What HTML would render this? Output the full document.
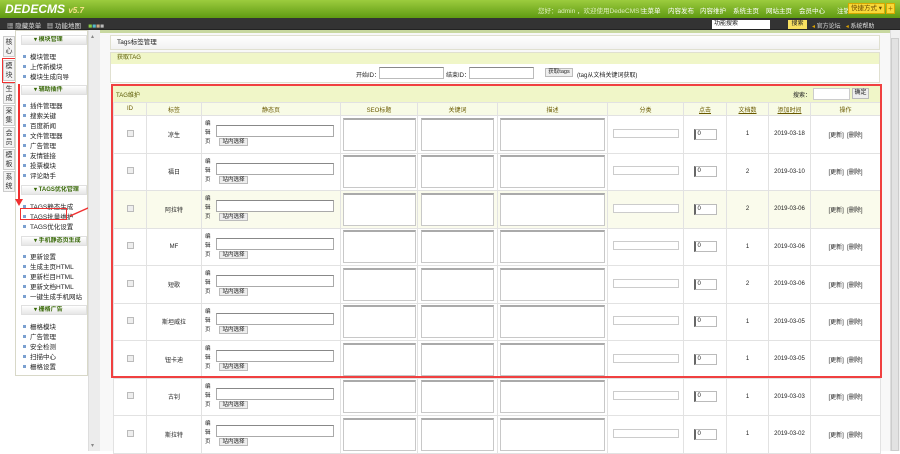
<!DOCTYPE html>
<html><head><meta charset="utf-8"><style>
*{margin:0;padding:0;box-sizing:border-box}
body{width:900px;height:451px;overflow:hidden;position:relative;background:#fff;font-family:"Liberation Sans","Noto Sans CJK SC",sans-serif;font-size:7px;color:#222}
.a{position:absolute;white-space:nowrap}
#hd{left:0;top:0;width:900px;height:18px;background:linear-gradient(#9ccc3e,#5f9a12)}
#bar{left:0;top:18px;width:900px;height:12px;background:#333;border-bottom:1px solid #222}
.logo{left:5px;top:2px;font:italic bold 12px "Liberation Sans",sans-serif;color:#fff}
.nav{top:5px;color:#fff;font-size:6.5px}
.tab{left:3px;width:12px;height:21px;border:1px solid #ccc;background:#f4f4f4;font-size:7px;line-height:9px;text-align:center;padding-top:1px;color:#333;white-space:normal}
#menu{left:15px;top:30px;width:73px;height:346px;background:#fff;border:1px solid #d8d8c8}
.mh{left:5px;width:66px;height:10px;background:linear-gradient(#fff,#e6e6e6);border:1px solid #e0e0e0;font-size:6px;line-height:8px;color:#3a6a0a;font-weight:bold;padding-left:12px;overflow:hidden}
.mi{left:7px;font-size:6.5px;color:#222}
.mi:before{content:"";display:inline-block;width:3px;height:3px;background:#7aa0d0;margin-right:4px;vertical-align:1px}
#split{left:88px;top:30px;width:12px;height:421px;background:#ececec;border-left:1px solid #ddd}
#cont{left:100px;top:30px;width:790px;height:421px;background:#f8f8f8;border-top:3px solid #c8d8a0}
table{border-collapse:collapse;table-layout:fixed;position:absolute;left:113px;top:102px;width:767px}
td{border:1px solid #e2e2e2;text-align:center;font-size:6px;vertical-align:middle;position:relative;white-space:nowrap}
th{height:13px;border:1px solid #e2e2e2;background:#f8fbe6;font-weight:normal;font-size:6px;color:#6a5a00}
tr.r{height:37.5px;background:#fff}
tr.y{background:#fafbec}
.cb{display:inline-block;width:7px;height:7px;border:1px solid #bbb;background:#eee}
.ta{display:block;margin:0 auto;height:33px;border:1px solid #c8c8c8;border-top:2px solid #aaa;background:#fff}
.sp{text-align:left;padding-left:3px}
.sp .v{position:absolute;left:3px;top:4px;width:6px;font-size:5.5px;line-height:9px;white-space:normal}
.sp .in{position:absolute;left:14px;top:9px;width:118px;height:12px;border:1px solid #aaa;border-top-color:#888;background:#fff}
.sp .bt{position:absolute;left:17px;top:22px;width:29px;height:8px;border:1px solid #bbb;background:#eee;font-size:5.5px;line-height:7px;text-align:center}
.ci{display:inline-block;width:66px;height:9px;border:1px solid #ccc;background:#fff}
.ck{display:inline-block;width:23px;height:11px;border:1px solid #bbb;border-left:2px solid #666;background:#fff;font-size:6px;line-height:9px;text-align:left;padding-left:2px}
</style></head><body>
<div id="hd" class="a"></div>
<div class="a logo">DEDECMS <span style="font-size:8px;color:#f5e28a">v5.7</span></div>
<div class="a nav" style="left:538px;color:#ddeebb">您好：admin ，欢迎使用DedeCMS！</div>
<div class="a nav" style="left:641px">主菜单</div>
<div class="a nav" style="left:668px">内容发布</div>
<div class="a nav" style="left:700px">内容维护</div>
<div class="a nav" style="left:733px">系统主页</div>
<div class="a nav" style="left:766px">网站主页</div>
<div class="a nav" style="left:799px">会员中心</div>
<div class="a nav" style="left:837px">注销</div>
<div class="a" style="left:848px;top:3px;width:37px;height:11px;background:#f8d838;border:1px solid #d8a800;font-size:6.5px;line-height:9px;padding-left:2px;color:#6a4a00">快捷方式 ▾</div>
<div class="a" style="left:886px;top:3px;width:9px;height:11px;background:#f8d838;border:1px solid #d8a800;color:#a07000;font-size:8px;line-height:9px;text-align:center">+</div>
<div id="bar" class="a"></div>
<div class="a" style="left:7px;top:20px;color:#ddd;font-size:6.5px">▦ 隐藏菜单 &nbsp;&nbsp;▦ 功能地图 &nbsp;&nbsp;&nbsp;<span style="color:#8c4">■</span><span style="color:#5bc">■</span><span style="color:#ca8">■</span><span style="color:#bbb">■</span></div>
<div class="a" style="left:712px;top:20px;width:58px;height:9px;background:#fff;font-size:6px;line-height:9px;padding-left:2px">功能搜索</div>
<div class="a" style="left:788px;top:20px;width:19px;height:9px;background:#f8e060;font-size:6px;line-height:9px;text-align:center">搜索</div>
<div class="a" style="left:812px;top:21px;color:#ddd;font-size:6px"><span style="color:#d9a000">◂</span> 官方论坛 &nbsp;&nbsp;<span style="color:#d9a000">◂</span> 系统帮助</div>

<div class="a tab" style="top:36px">核<br>心</div>
<div class="a tab" style="top:60px">模<br>块</div>
<div class="a" style="left:2px;top:58px;width:15px;height:25px;border:1.5px solid #f03030"></div>
<div class="a tab" style="top:83px">生<br>成</div>
<div class="a tab" style="top:105px">采<br>集</div>
<div class="a tab" style="top:127px">会<br>员</div>
<div class="a tab" style="top:149px">模<br>板</div>
<div class="a tab" style="top:171px">系<br>统</div>

<div id="menu" class="a">
<div class="a mh" style="top:4px">▾ 模块管理</div>
<div class="a mi" style="top:20px">模块管理</div><div class="a mi" style="top:30px">上传新模块</div><div class="a mi" style="top:40px">模块生成向导</div>
<div class="a mh" style="top:54px">▾ 辅助插件</div>
<div class="a mi" style="top:69px">插件管理器</div><div class="a mi" style="top:79px">搜索关键</div><div class="a mi" style="top:89px">百度新闻</div><div class="a mi" style="top:99px">文件管理器</div><div class="a mi" style="top:109px">广告管理</div><div class="a mi" style="top:119px">友情链接</div><div class="a mi" style="top:129px">投票模块</div><div class="a mi" style="top:139px">评论助手</div>
<div class="a mh" style="top:154px">▾ TAGS优化管理</div>
<div class="a mi" style="top:170px">TAGS静态生成</div><div class="a mi" style="top:180px">TAGS批量维护</div><div class="a mi" style="top:190px">TAGS优化设置</div>
<div class="a mh" style="top:205px">▾ 手机静态页生成</div>
<div class="a mi" style="top:220px">更新设置</div><div class="a mi" style="top:230px">生成主页HTML</div><div class="a mi" style="top:240px">更新栏目HTML</div><div class="a mi" style="top:250px">更新文档HTML</div><div class="a mi" style="top:260px">一键生成手机网站</div>
<div class="a mh" style="top:274px">▾ 栅格广告</div>
<div class="a mi" style="top:290px">栅格模块</div><div class="a mi" style="top:300px">广告管理</div><div class="a mi" style="top:310px">安全检测</div><div class="a mi" style="top:320px">扫描中心</div><div class="a mi" style="top:330px">栅格设置</div>
</div>
<div class="a" style="left:20px;top:208px;width:47px;height:12px;border:1.5px solid #f03030"></div>
<div class="a" style="left:18px;top:84px;width:2px;height:118px;background:#f03030"></div>
<div class="a" style="left:15px;top:199px;width:0;height:0;border-left:4px solid transparent;border-right:4px solid transparent;border-top:7px solid #f03030"></div>
<svg class="a" style="left:68px;top:195px" width="46" height="24"><line x1="2" y1="21" x2="38" y2="5" stroke="#f03030" stroke-width="1.5"/><polygon points="43,2 33,3 37,10" fill="#f03030"/></svg>

<div id="split" class="a"></div>
<div class="a" style="left:91px;top:33px;font-size:6px;color:#888">▴</div>
<div class="a" style="left:91px;top:442px;font-size:6px;color:#888">▾</div>
<div id="cont" class="a"></div>
<div class="a" style="left:890px;top:30px;width:10px;height:421px;background:#f0f0f0;border-left:1px solid #ddd"></div>
<div class="a" style="left:891px;top:38px;width:8px;height:413px;background:#e2e2e2;border:1px solid #ccc"></div>

<div class="a" style="left:110px;top:35px;width:770px;height:15px;background:linear-gradient(#fff,#f2f2f2);border:1px solid #e0e0d0;font-size:6.5px;line-height:13px;padding-left:6px">Tags标签管理</div>
<div class="a" style="left:110px;top:52px;width:770px;height:31px;background:#fff;border:1px solid #e0e0d0"></div>
<div class="a" style="left:111px;top:53px;width:768px;height:11px;background:#f0f6c8;font-size:6px;line-height:11px;padding-left:6px;color:#5a5a00">获取TAG</div>
<div class="a" style="left:356px;top:70px;font-size:6px">开始ID：</div>
<div class="a" style="left:379px;top:67px;width:65px;height:12px;border:1px solid #bbb;border-top-color:#888;background:#fff"></div>
<div class="a" style="left:446px;top:70px;font-size:6px">结束ID：</div>
<div class="a" style="left:469px;top:67px;width:65px;height:12px;border:1px solid #bbb;border-top-color:#888;background:#fff"></div>
<div class="a" style="left:545px;top:68px;width:28px;height:9px;border:1px solid #bbb;background:#eee;font-size:5.5px;line-height:7px;text-align:center">获取tags</div>
<div class="a" style="left:577px;top:70px;font-size:6px">(tag从文档关键词获取)</div>

<div class="a" style="left:111px;top:85px;width:770px;height:17px;background:#f0f6c8"></div>
<div class="a" style="left:116px;top:90px;font-size:6px;color:#5a5a00">TAG维护</div>
<div class="a" style="left:793px;top:90px;font-size:6px">搜索：</div>
<div class="a" style="left:813px;top:88px;width:37px;height:12px;border:1px solid #ccc;background:#fff"></div>
<div class="a" style="left:852px;top:88px;width:17px;height:11px;border:1px solid #bbb;background:#eee;font-size:6px;line-height:9px;text-align:center">确定</div>

<table>
<colgroup><col style="width:33px"><col style="width:55px"><col style="width:139px"><col style="width:77px"><col style="width:80px"><col style="width:110px"><col style="width:76px"><col style="width:43px"><col style="width:42px"><col style="width:42px"><col style="width:70px"></colgroup>
<tr><th>ID</th><th>标签</th><th>静态页</th><th>SEO标题</th><th>关键词</th><th>描述</th><th>分类</th><th><u>点击</u></th><th><u>文档数</u></th><th><u>添加时间</u></th><th>操作</th></tr>
<tr class="r"><td><span class="cb"></span></td><td>凉生</td><td class="sp"><span class="v">编辑页</span><span class="in"></span><span class="bt">站内选择</span></td><td><span class="ta" style="width:73px"></span></td><td><span class="ta" style="width:73px"></span></td><td><span class="ta" style="width:105px"></span></td><td><span class="ci"></span></td><td><span class="ck">0</span></td><td>1</td><td>2019-03-18</td><td>[更新] &nbsp;[删除]</td></tr>
<tr class="r"><td><span class="cb"></span></td><td>福日</td><td class="sp"><span class="v">编辑页</span><span class="in"></span><span class="bt">站内选择</span></td><td><span class="ta" style="width:73px"></span></td><td><span class="ta" style="width:73px"></span></td><td><span class="ta" style="width:105px"></span></td><td><span class="ci"></span></td><td><span class="ck">0</span></td><td>2</td><td>2019-03-10</td><td>[更新] &nbsp;[删除]</td></tr>
<tr class="r y"><td><span class="cb"></span></td><td>阿拉特</td><td class="sp"><span class="v">编辑页</span><span class="in"></span><span class="bt">站内选择</span></td><td><span class="ta" style="width:73px"></span></td><td><span class="ta" style="width:73px"></span></td><td><span class="ta" style="width:105px"></span></td><td><span class="ci"></span></td><td><span class="ck">0</span></td><td>2</td><td>2019-03-06</td><td>[更新] &nbsp;[删除]</td></tr>
<tr class="r"><td><span class="cb"></span></td><td>MF</td><td class="sp"><span class="v">编辑页</span><span class="in"></span><span class="bt">站内选择</span></td><td><span class="ta" style="width:73px"></span></td><td><span class="ta" style="width:73px"></span></td><td><span class="ta" style="width:105px"></span></td><td><span class="ci"></span></td><td><span class="ck">0</span></td><td>1</td><td>2019-03-06</td><td>[更新] &nbsp;[删除]</td></tr>
<tr class="r"><td><span class="cb"></span></td><td>短歌</td><td class="sp"><span class="v">编辑页</span><span class="in"></span><span class="bt">站内选择</span></td><td><span class="ta" style="width:73px"></span></td><td><span class="ta" style="width:73px"></span></td><td><span class="ta" style="width:105px"></span></td><td><span class="ci"></span></td><td><span class="ck">0</span></td><td>2</td><td>2019-03-06</td><td>[更新] &nbsp;[删除]</td></tr>
<tr class="r"><td><span class="cb"></span></td><td>斯坦威拉</td><td class="sp"><span class="v">编辑页</span><span class="in"></span><span class="bt">站内选择</span></td><td><span class="ta" style="width:73px"></span></td><td><span class="ta" style="width:73px"></span></td><td><span class="ta" style="width:105px"></span></td><td><span class="ci"></span></td><td><span class="ck">0</span></td><td>1</td><td>2019-03-05</td><td>[更新] &nbsp;[删除]</td></tr>
<tr class="r"><td><span class="cb"></span></td><td>钮卡迪</td><td class="sp"><span class="v">编辑页</span><span class="in"></span><span class="bt">站内选择</span></td><td><span class="ta" style="width:73px"></span></td><td><span class="ta" style="width:73px"></span></td><td><span class="ta" style="width:105px"></span></td><td><span class="ci"></span></td><td><span class="ck">0</span></td><td>1</td><td>2019-03-05</td><td>[更新] &nbsp;[删除]</td></tr>
<tr class="r"><td><span class="cb"></span></td><td>古钊</td><td class="sp"><span class="v">编辑页</span><span class="in"></span><span class="bt">站内选择</span></td><td><span class="ta" style="width:73px"></span></td><td><span class="ta" style="width:73px"></span></td><td><span class="ta" style="width:105px"></span></td><td><span class="ci"></span></td><td><span class="ck">0</span></td><td>1</td><td>2019-03-03</td><td>[更新] &nbsp;[删除]</td></tr>
<tr class="r"><td><span class="cb"></span></td><td>斯拉特</td><td class="sp"><span class="v">编辑页</span><span class="in"></span><span class="bt">站内选择</span></td><td><span class="ta" style="width:73px"></span></td><td><span class="ta" style="width:73px"></span></td><td><span class="ta" style="width:105px"></span></td><td><span class="ci"></span></td><td><span class="ck">0</span></td><td>1</td><td>2019-03-02</td><td>[更新] &nbsp;[删除]</td></tr>
</table>
<div class="a" style="left:111px;top:84px;width:771px;height:294px;border:2px solid #f04040"></div>
</body></html>
